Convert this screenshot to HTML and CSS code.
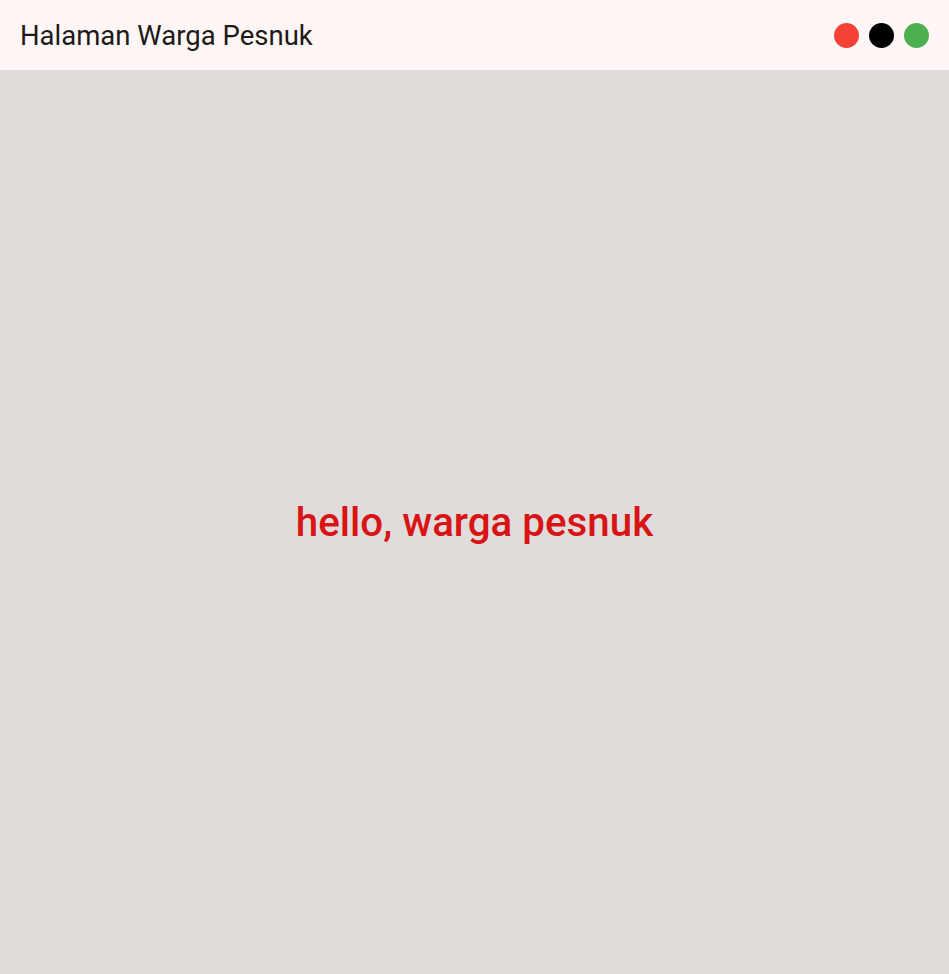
FILE: index.html
```html
<!DOCTYPE html>
<html>
<head>
<meta charset="utf-8">
<link rel="stylesheet" href="styles.css">
</head>
<body>
<div class="app">
  <header class="bar">
    <div class="title">Halaman Warga Pesnuk</div>
    <div class="dots">
      <span class="dot red"></span>
      <span class="dot black"></span>
      <span class="dot green"></span>
    </div>
  </header>
  <main class="content">
    <div class="greet">hello, warga pesnuk</div>
  </main>
</div>
</body>
</html>
```
FILE: styles.css
```css
html, body { margin: 0; padding: 0; height: 100%; }
body { font-family: Roboto, "Noto Sans", sans-serif; background: #e0dcdc; }
.app { display: flex; flex-direction: column; height: 100%; }
.bar {
  height: 70px;
  flex: none;
  background: #fff6f5;
  display: flex;
  align-items: center;
  justify-content: space-between;
  padding: 0 20px 0 20px;
  box-sizing: border-box;
}
.title { font-size: 27.5px; color: #1e1a1a; font-weight: 400; }
.dots { display: flex; gap: 10px; }
.dot { width: 25px; height: 25px; border-radius: 50%; display: block; }
.red { background: #f44336; }
.black { background: #000000; }
.green { background: #4caf50; }
.content {
  flex: 1;
  display: flex;
  align-items: center;
  justify-content: center;
}
.greet { font-size: 40.3px; font-weight: 500; color: #d81414; }
```
